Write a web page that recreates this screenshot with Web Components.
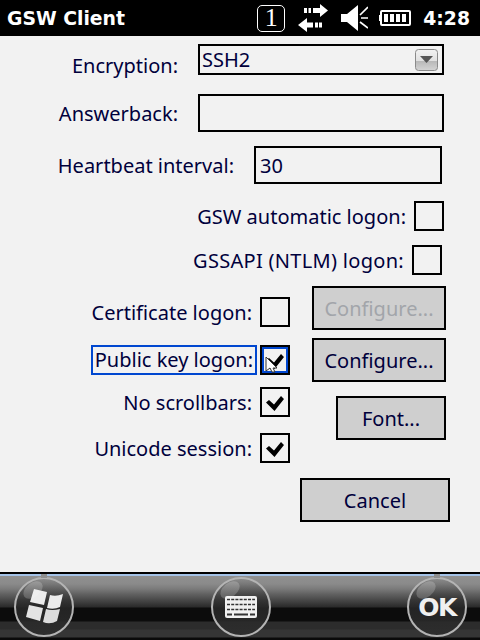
<!DOCTYPE html>
<html>
<head>
<meta charset="utf-8">
<title>GSW Client</title>
<style>
  html, body { margin: 0; padding: 0; }
  body {
    width: 480px;
    height: 640px;
    overflow: hidden;
    display: flex;
    flex-direction: column;
    font-family: "Noto Sans", "Liberation Sans", sans-serif;
    color: #00003c;
    background: #f2f2f2;
  }
  form-panel { flex: 1; }
</style>
</head>
<body>
<status-bar title="GSW Client" time="4:28"></status-bar>
<form-panel></form-panel>
<soft-bar></soft-bar>

<script>
class StatusBar extends HTMLElement {
  constructor() {
    super();
    this.shadowDOM = this.attachShadow({ mode: "open" });
  }

  connectedCallback() {
    this.shadowDOM.innerHTML = `
      <style>
        :host {
          display: flex;
          align-items: center;
          height: 36px;
          background: #000;
          color: #fff;
          padding: 0 10px 0 7px;
          box-sizing: border-box;
          font: bold 18.8px "DejaVu Sans", sans-serif;
        }
        .title { flex: 1; }
        .time { margin-left: 12px; }
        svg { display: block; flex: none; }
        .sim {
          box-sizing: border-box;
          width: 28px;
          height: 27px;
          border: 1.5px solid #fff;
          border-radius: 5px;
          font: 26px/24px "Liberation Serif", serif;
          text-align: center;
        }
        .sync { margin-left: 13px; }
        .vol { margin-left: 13px; }
        .batt { margin-left: 11px; }
      </style>
      <span class="title">${this.getAttribute("title")}</span>
      <span class="sim">1</span>
      <svg class="sync" width="30" height="30" viewBox="0 0 30 30" fill="#fff">
        <path d="M6 5h3v5h-3zM10.500 5h2.500v5h-2.500zM15 5h7v-4l8 6.500-8 6.500v-4h-7z"/>
        <path d="M0 22l9-7v4.500h6v5h-6v4.500zM17 19.500h3v5h-3zM21 19.500h3v5h-3z"/>
      </svg>
      <svg class="vol" width="27" height="26" viewBox="0 0 27 26" fill="#fff">
        <path d="M0 9h6l11-9v26l-11-9h-6z"/>
        <path d="M19 10l8-8M20 13h7M19 17l8 6" stroke="#fff" stroke-width="1.7" fill="none"/>
      </svg>
      <svg class="batt" width="32" height="16" viewBox="0 0 32 16" fill="#fff">
        <path d="M3 0h27a2 2 0 0 1 2 2v12a2 2 0 0 1-2 2h-27a2 2 0 0 1-2-2v-3h-1v-6h1v-3a2 2 0 0 1 2-2zM3 2v12h27v-12z" fill-rule="evenodd"/>
        <path d="M5 4h4v8h-4zM11 4h4v8h-4zM17 4h4v8h-4zM23 4h4v8h-4z"/>
      </svg>
      <span class="time">${this.getAttribute("time")}</span>
    `;
  }
}

class CheckBox extends HTMLElement {
  constructor() {
    super();
    this.shadowDOM = this.attachShadow({ mode: "open" });
  }

  connectedCallback() {
    const checked = this.hasAttribute("checked");
    const focused = this.hasAttribute("focused");
    this.shadowDOM.innerHTML = `
      <style>
        :host {
          display: block;
          position: relative;
          width: 30px;
          height: 30px;
          box-sizing: border-box;
          border: 2px solid #000;
          flex: none;
        }
        :host([focused]) { outline: 2px solid #0047d0; outline-offset: -4px; }
        svg { position: absolute; left: 4px; top: 6px; }
        .cursor { left: 3px; top: 9px; }
      </style>
      ${checked ? `<svg width="18" height="16" viewBox="0 0 18 16"><path d="M0 7.500L3 5l5 4.500L15 1l3 3L8.500 16z" fill="#000"/></svg>` : ""}
      ${focused ? `<svg class="cursor" width="14" height="17" viewBox="0 0 14 17"><path d="M1 1l11 11h-4l2 4h-3l-2-4-4 3z" fill="#fff" stroke="#333"/></svg>` : ""}
    `;
  }
}

class PlainButton extends HTMLElement {
  constructor() {
    super();
    this.shadowDOM = this.attachShadow({ mode: "open" });
  }

  connectedCallback() {
    this.shadowDOM.innerHTML = `
      <style>
        :host {
          display: flex;
          align-items: center;
          justify-content: center;
          box-sizing: border-box;
          height: 44px;
          border: 2px solid #000;
          background: #cfcfcf;
          font-size: 20px;
        }
        :host([disabled]) { color: #a2a5aa; }
      </style>
      <slot></slot>
    `;
  }
}

class TextField extends HTMLElement {
  constructor() {
    super();
    this.shadowDOM = this.attachShadow({ mode: "open" });
  }

  connectedCallback() {
    this.shadowDOM.innerHTML = `
      <style>
        :host {
          display: flex;
          align-items: center;
          box-sizing: border-box;
          border: 2px solid #000;
          padding: 0 2px;
          font-size: 20px;
        }
        :host([wide]) { padding: 0 4px; }
        .arrow {
          margin-left: auto;
          width: 23px;
          height: 22px;
          margin-right: 2px;
          display: block;
        }
        .txt { flex: 1; }
      </style>
      <span class="txt"><slot></slot></span>
      ${this.hasAttribute("combo") ? `
      <svg class="arrow" viewBox="0 0 23 22">
        <defs><linearGradient id="g" x1="0" y1="0" x2="0" y2="1">
          <stop offset="0" stop-color="#f2f2f2"/><stop offset=".55" stop-color="#e0e0e0"/><stop offset=".56" stop-color="#b8b8b8"/><stop offset="1" stop-color="#d4d4d4"/>
        </linearGradient></defs>
        <rect x=".5" y=".5" width="22" height="21" rx="3" fill="url(#g)" stroke="#8a8a8a"/>
        <path d="M5 7h13l-6.500 7z" fill="#555"/>
      </svg>` : ""}
    `;
  }
}

class FieldLabel extends HTMLElement {
  constructor() {
    super();
    this.shadowDOM = this.attachShadow({ mode: "open" });
  }

  connectedCallback() {
    this.shadowDOM.innerHTML = `
      <style>
        :host {
          display: block;
          font-size: 20px;
          white-space: nowrap;
          text-align: right;
        }
        :host([focused]) {
          box-sizing: border-box;
          height: 30px;
          line-height: 26px;
          border: 2px solid #0047d0;
          padding: 0 2px 0 2px;
        }
      </style>
      <slot></slot>
    `;
  }
}

class FormPanel extends HTMLElement {
  constructor() {
    super();
    this.shadowDOM = this.attachShadow({ mode: "open" });
  }

  connectedCallback() {
    this.shadowDOM.innerHTML = `
      <style>
        :host {
          display: block;
          background: #f2f2f2;
          box-sizing: border-box;
        }
        .row { display: flex; align-items: center; justify-content: flex-end; }
        .enc { margin-top: 8px; height: 31px; padding-right: 36px; }
        .enc field-label { margin: 11px 20px 0 0; }
        .enc text-field { width: 246px; height: 31px; }
        .ans { margin-top: 19px; height: 38px; padding-right: 36px; }
        .ans field-label { margin-right: 20px; }
        .ans text-field { width: 246px; height: 38px; }
        .hb { margin-top: 14px; height: 38px; padding-right: 38px; }
        .hb field-label { margin-right: 20px; }
        .hb text-field { width: 188px; height: 38px; }
        .gsw { margin-top: 17px; height: 30px; padding-right: 36px; gap: 8px; }
        .ntlm { margin-top: 14px; height: 30px; padding-right: 38px; gap: 8px; }
        .ntlm field-label { letter-spacing: .3px; }
        .split { display: flex; margin-top: 11px; }
        .left { width: 290px; flex: none; }
        .left .row { gap: 8px; height: 30px; }
        .left .row.pub { gap: 3px; }
        .cert { margin-top: 11px; }
        .pub { margin-top: 18px; }
        .nos { margin-top: 12px; }
        .uni { margin-top: 16px; }
        .right { flex: 1; display: flex; flex-direction: column; align-items: flex-end; padding-right: 34px; }
        .c1, .c2 { width: 134px; }
        .c2 { margin-top: 8px; }
        .font { width: 110px; margin-top: 14px; }
        .cancel-row { margin-top: 15px; padding-right: 30px; }
        .cancel { width: 150px; }
      </style>
      <div class="row enc"><field-label>Encryption:</field-label><text-field combo>SSH2</text-field></div>
      <div class="row ans"><field-label>Answerback:</field-label><text-field></text-field></div>
      <div class="row hb"><field-label>Heartbeat interval:</field-label><text-field wide>30</text-field></div>
      <div class="row gsw"><field-label>GSW automatic logon:</field-label><check-box></check-box></div>
      <div class="row ntlm"><field-label>GSSAPI (NTLM) logon:</field-label><check-box></check-box></div>
      <div class="split">
        <div class="left">
          <div class="row cert"><field-label>Certificate logon:</field-label><check-box></check-box></div>
          <div class="row pub"><field-label focused>Public key logon:</field-label><check-box checked focused></check-box></div>
          <div class="row nos"><field-label>No scrollbars:</field-label><check-box checked></check-box></div>
          <div class="row uni"><field-label>Unicode session:</field-label><check-box checked></check-box></div>
        </div>
        <div class="right">
          <plain-button class="c1" disabled>Configure...</plain-button>
          <plain-button class="c2">Configure...</plain-button>
          <plain-button class="font">Font...</plain-button>
        </div>
      </div>
      <div class="row cancel-row"><plain-button class="cancel">Cancel</plain-button></div>
    `;
  }
}

class RoundKey extends HTMLElement {
  constructor() {
    super();
    this.shadowDOM = this.attachShadow({ mode: "open" });
  }

  connectedCallback() {
    this.shadowDOM.innerHTML = `
      <style>
        :host {
          display: flex;
          align-items: center;
          justify-content: center;
          position: relative;
          width: 60px;
          height: 60px;
          box-sizing: border-box;
          border: 2px solid #b4b4b4;
          border-radius: 50%;
          background: linear-gradient(180deg, rgba(120,120,120,.2), rgba(40,40,40,.85) 50%, rgba(45,45,45,.9));
          color: #f0f0f0;
          font: bold 25px "DejaVu Sans", sans-serif;
          letter-spacing: -1.5px;
        }
        :host::before {
          content: "";
          position: absolute;
          left: 6px;
          top: 4px;
          width: 22px;
          height: 14px;
          border-radius: 50%;
          transform: rotate(-38deg);
          background: rgba(255,255,255,.2);
        }
        :host([nub])::after {
          content: "";
          position: absolute;
          left: 25px;
          top: -5px;
          width: 6px;
          height: 4px;
          background: #8f8f8f;
        }
      </style>
      <slot></slot>
    `;
  }
}

class SoftBar extends HTMLElement {
  constructor() {
    super();
    this.shadowDOM = this.attachShadow({ mode: "open" });
  }

  connectedCallback() {
    this.shadowDOM.innerHTML = `
      <style>
        :host {
          display: flex;
          align-items: center;
          justify-content: space-between;
          box-sizing: border-box;
          height: 68px;
          padding: 0 13px 0 14px;
          border-top: 2px solid #000;
          box-shadow: inset 0 2px 0 #a5c3e8;
          background: linear-gradient(180deg,
            #929292 0, #8a8a8a 10px, #7a7a7a 15px, #626262 20px, #484848 26px, #2a2a2a 33px,
            #0c0c0c 34px, #0c0c0c 47px, #2c2c2c 48px, #2c2c2c 55px, #353535 56px, #353535 63px, #0a0a0a 64px);
        }
      </style>
      <round-key nub>
        <svg width="37" height="36" viewBox="0 0 37 36" fill="#ececec">
          <path d="M8 0L21 3 18 16 4 13z"/>
          <path d="M24 6Q30 8 37 5L34 18Q28 21 21 19z"/>
          <path d="M3 16L17 19 14 32 0 28z" fill="#e4e4e4"/>
          <path d="M20 20Q26 22 34 20L31 32Q24 36 17 33z" fill="#dcdcdc"/>
        </svg>
      </round-key>
      <round-key>
        <svg width="32" height="22" viewBox="0 0 32 22">
          <rect width="32" height="22" rx="2" fill="#f0f0f0"/>
          <path d="M2 3.500h28M2 8.500h28M2 13.500h28" stroke="#333" stroke-width="1.4" stroke-dasharray="3 1.200"/>
          <path d="M2 18.500h5M9 18.500h14M25 18.500h5" stroke="#333" stroke-width="2"/>
        </svg>
      </round-key>
      <round-key nub>OK</round-key>
    `;
  }
}

customElements.define("status-bar", StatusBar);
customElements.define("check-box", CheckBox);
customElements.define("plain-button", PlainButton);
customElements.define("text-field", TextField);
customElements.define("field-label", FieldLabel);
customElements.define("form-panel", FormPanel);
customElements.define("round-key", RoundKey);
customElements.define("soft-bar", SoftBar);
</script>
</body>
</html>
